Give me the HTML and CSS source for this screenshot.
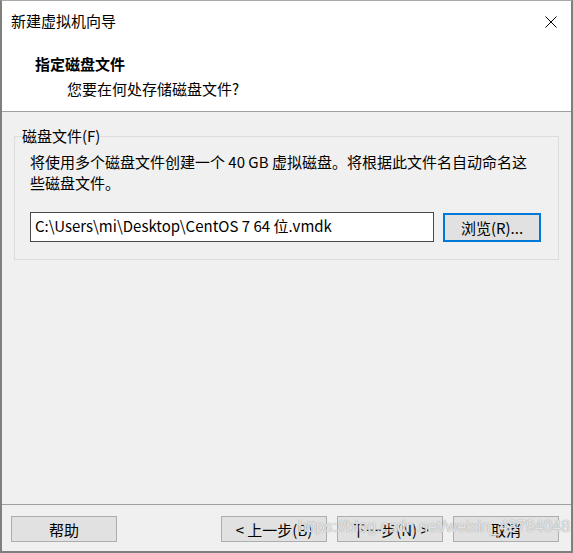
FILE: index.html
```html
<!DOCTYPE html>
<html lang="zh-CN">
<head>
<meta charset="utf-8">
<title>新建虚拟机向导</title>
<link rel="stylesheet" href="styles.css">
</head>
<body>
<div class="window">
  <div class="top">
    <div class="titlebar">
      <span class="title">新建虚拟机向导</span>
      <span class="close" aria-label="关闭">
        <svg width="12" height="12" viewBox="0 0 12 12"><path d="M0.5 0.5 L11.5 11.5 M11.5 0.5 L0.5 11.5" stroke="#000" stroke-width="1" fill="none"/></svg>
      </span>
    </div>
    <div class="header">
      <div class="heading">指定磁盘文件</div>
      <div class="subheading">您要在何处存储磁盘文件?</div>
    </div>
  </div>
  <div class="main">
    <fieldset class="group">
      <legend class="legend">磁盘文件(F)</legend>
      <div class="group-body">
        <p class="desc">将使用多个磁盘文件创建一个 40 GB 虚拟磁盘。将根据此文件名自动命名这些磁盘文件。</p>
        <div class="path-row">
          <div class="path-input">C:\Users\mi\Desktop\CentOS 7 64 位.vmdk</div>
          <button class="btn btn-focus">浏览(R)...</button>
        </div>
      </div>
    </fieldset>
  </div>
  <div class="footer">
    <button class="btn btn-foot">帮助</button>
    <div class="spacer"></div>
    <div class="nav">
      <button class="btn btn-foot">&lt; 上一步(B)</button>
      <button class="btn btn-foot">下一步(N) &gt;</button>
      <button class="btn btn-foot">取消</button>
    </div>
    <div class="watermark">https://blog.csdn.net/weixin_43794048</div>
  </div>
</div>
</body>
</html>
```

FILE: styles.css
```css
* { box-sizing: border-box; }
html, body { margin: 0; padding: 0; }
body {
  width: 573px;
  height: 553px;
  background: #f0f0f0;
  font-family: "Noto Sans CJK SC", "Noto Sans", sans-serif;
  font-size: 15px;
  color: #000;
  overflow: hidden;
}
.window {
  width: 573px;
  height: 553px;
  display: flex;
  flex-direction: column;
  border-top: 1px solid #a9a9a9;
  border-left: 2px solid #7f7f7f;
  border-right: 2px solid #7f7f7f;
  border-bottom: 2px solid #7f7f7f;
  background: #f0f0f0;
  position: relative;
}
.top {
  background: #fff;
  height: 111px;
  border-bottom: 1px solid #a0a0a0;
  flex: none;
}
.titlebar {
  height: 39px;
  display: flex;
  align-items: center;
  justify-content: space-between;
  padding: 0 14px 0 9px;
}
.title { line-height: 20px; }
.close { display: flex; width: 12px; height: 12px; margin-top: 2px; }
.header { padding: 12px 0 0 33px; }
.heading { font-weight: bold; line-height: 24px; }
.subheading { padding-left: 32px; line-height: 24px; margin-top: 1px; }
.main {
  flex: 1;
  padding: 14px 12px 0 12px;
}
.group {
  margin: 0;
  border: 1px solid #dcdcdc;
  padding: 0 15px 17px 7px;
  min-width: 0;
}
.legend {
  padding: 0;
  line-height: 20px;
}
.group-body { padding-left: 8px; }
.desc {
  margin: 5px 0 0 0;
  padding-right: 5px;
  line-height: 21px;
}
.path-row {
  display: flex;
  align-items: center;
  margin-top: 19px;
  gap: 9px;
}
.path-input {
  width: 404px;
  height: 30px;
  border: 1px solid #484848;
  background: #fff;
  padding: 0 4px;
  line-height: 26px;
  white-space: nowrap;
}
.btn {
  font-family: inherit;
  font-size: 15px;
  color: #000;
  background: #e1e1e1;
  border: 1px solid #adadad;
  padding: 0;
  margin: 0;
}
.btn-focus {
  width: 98px;
  height: 29px;
  border: 2px solid #0078d7;
}
.footer {
  flex: none;
  height: 47px;
  border-top: 1px solid #a0a0a0;
  display: flex;
  padding: 11px 12px 0 9px;
  position: relative;
}
.spacer { flex: 1; }
.nav { display: flex; gap: 10px; }
.btn-foot {
  width: 106px;
  height: 26px;
}
.watermark {
  position: absolute;
  left: 296px;
  top: 13px;
  font-family: "Liberation Sans", Arial, sans-serif;
  font-size: 16px;
  color: rgba(255,255,255,0.7);
  text-shadow: 0 0 1px #a8a8a8, 0 0 1px #a8a8a8;
  white-space: nowrap;
  pointer-events: none;
}
```
